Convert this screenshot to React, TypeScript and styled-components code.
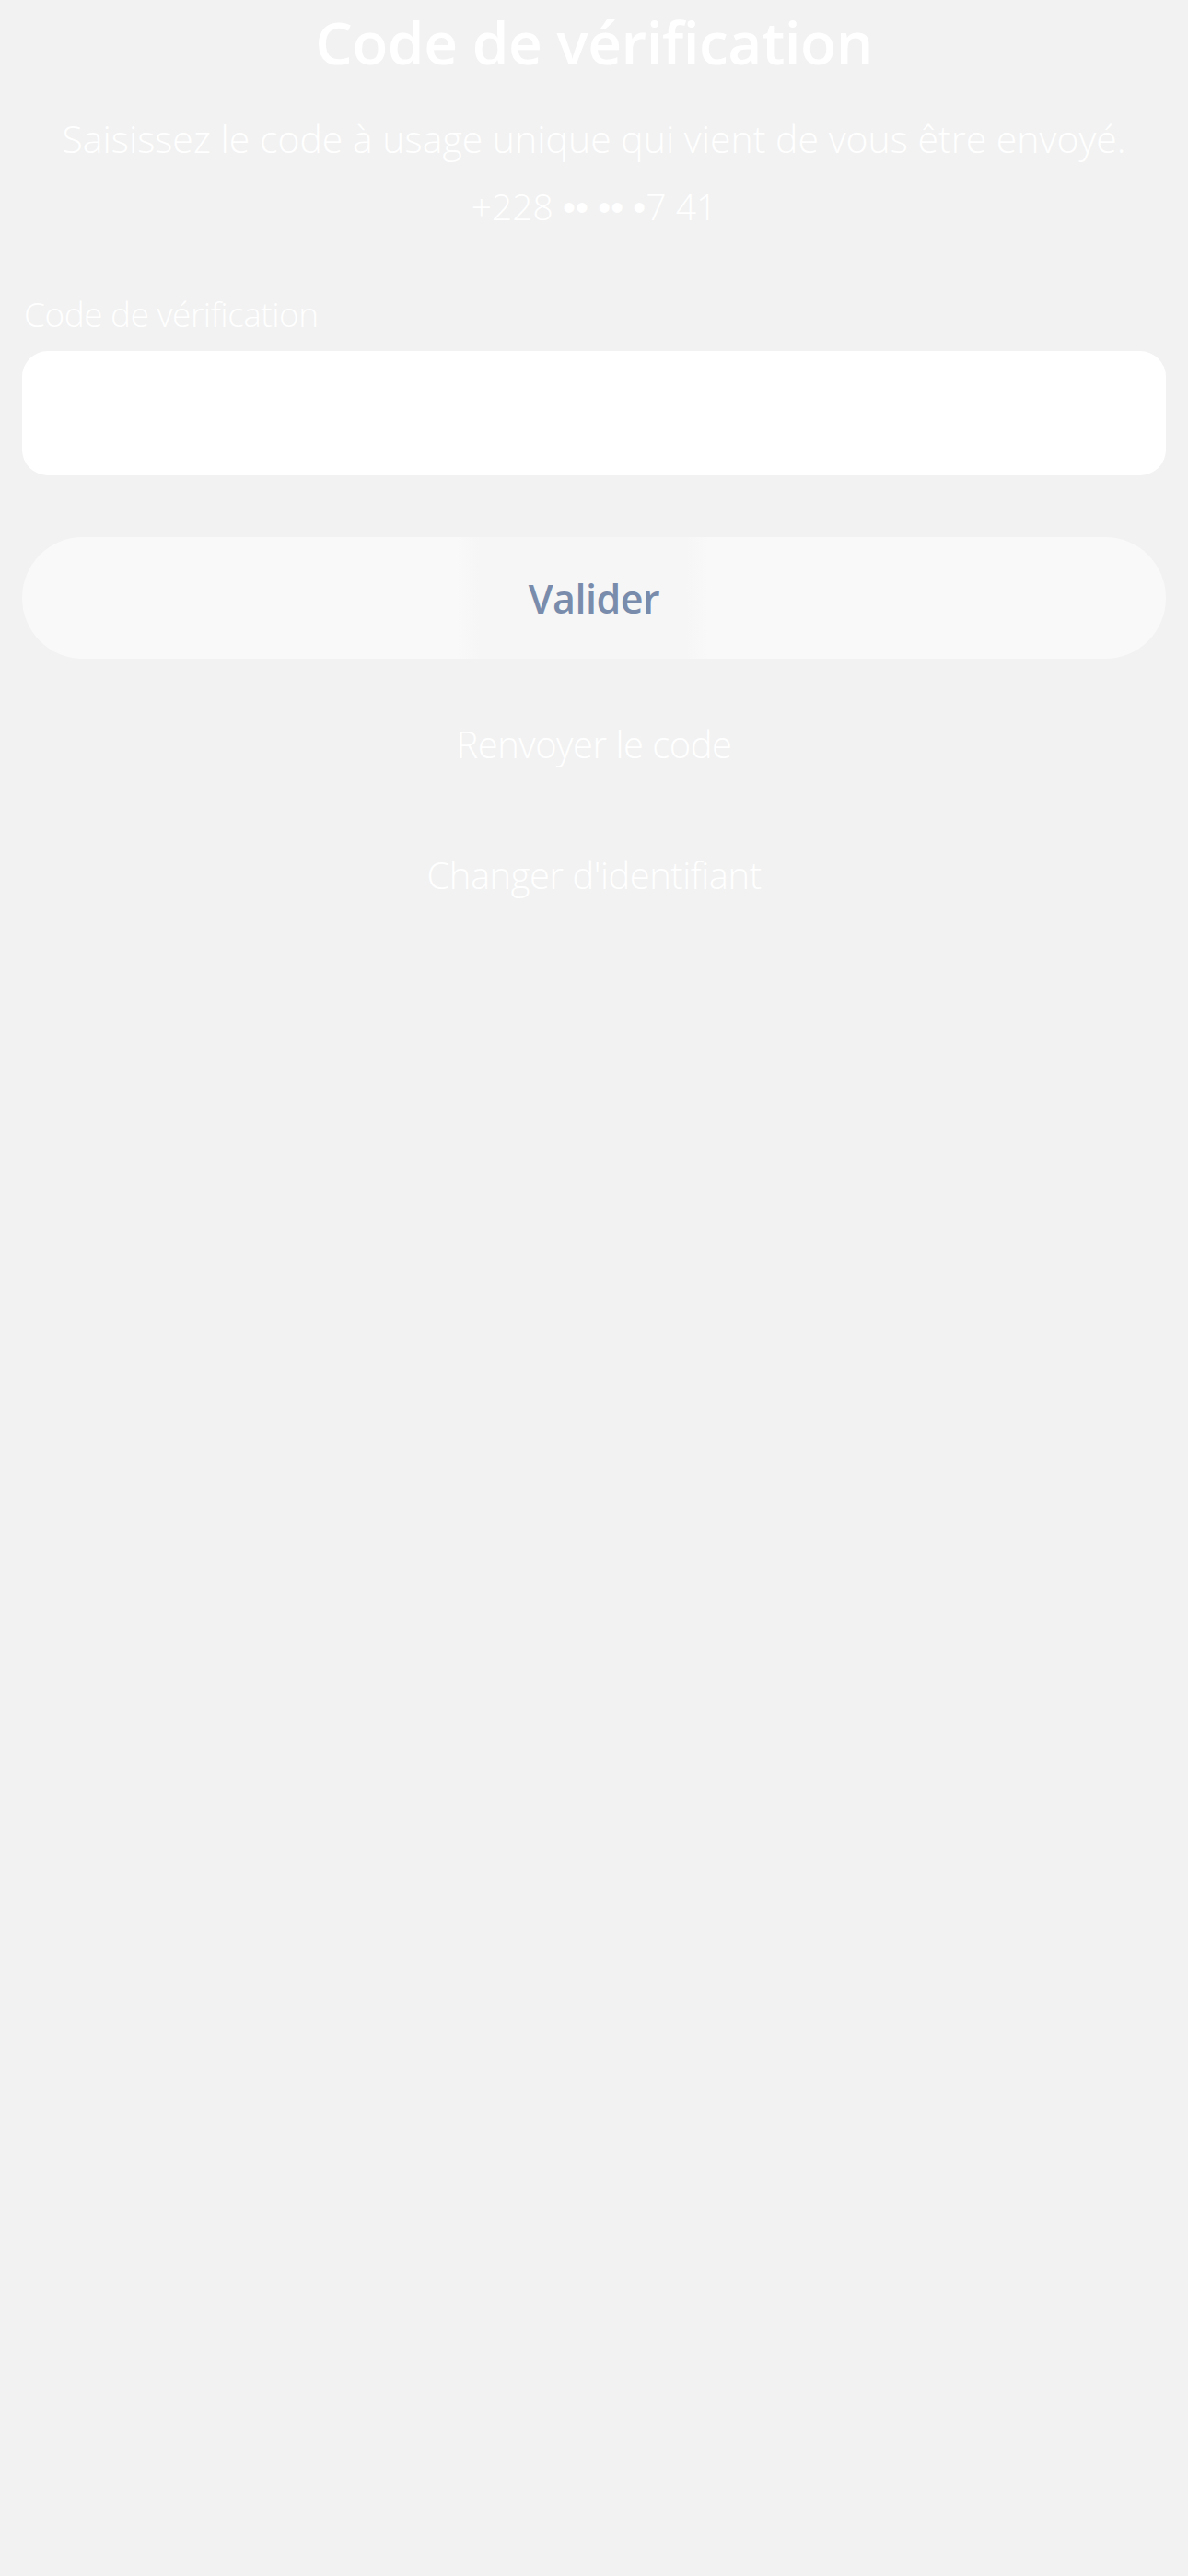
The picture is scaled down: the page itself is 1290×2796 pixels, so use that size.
import styled, { createGlobalStyle } from 'styled-components';

const GlobalStyle = createGlobalStyle`
  html, body {
    margin: 0;
    padding: 0;
    background: #f2f2f2;
  }
  body {
    font-family: 'Open Sans', 'Noto Sans', sans-serif;
  }
`;

const Page = styled.div`
  min-height: 2796px;
  display: flex;
  flex-direction: column;
  padding: 0 24px;
  box-sizing: border-box;
  background: #f2f2f2;
  color: #ffffff;
`;

const Title = styled.h1`
  margin: 6px 0 0;
  font-size: 64px;
  line-height: 80px;
  font-weight: 600;
  text-align: center;
  letter-spacing: -0.5px;
`;

const Subtitle = styled.p`
  margin: 36px 0 0;
  font-size: 41px;
  line-height: 56px;
  font-weight: 300;
  text-align: center;
`;

const Phone = styled.p`
  margin: 18px 0 0;
  font-size: 39px;
  line-height: 56px;
  font-weight: 300;
  text-align: center;
`;

const Mask = styled.span`
  font-family: 'Liberation Sans', Arial, sans-serif;
  font-size: 40px;
`;

const Field = styled.label`
  display: flex;
  flex-direction: column;
  margin-top: 63px;
  gap: 15px;
`;

const FieldLabel = styled.span`
  font-size: 37px;
  line-height: 50px;
  font-weight: 300;
  padding-left: 2px;
  letter-spacing: -0.5px;
`;

const CodeInput = styled.input`
  height: 135px;
  border: none;
  border-radius: 28px;
  background: #ffffff;
  outline: none;
  padding: 0 32px;
  font-family: inherit;
  font-size: 40px;
  box-sizing: border-box;
`;

const SubmitButton = styled.button`
  margin-top: 67px;
  height: 132px;
  border: none;
  border-radius: 66px;
  background: linear-gradient(
    90deg,
    #f9f9f9 0%,
    #f9f9f9 38%,
    #f6f6f6 40%,
    #f6f6f6 58%,
    #f9f9f9 60%,
    #f9f9f9 100%
  );
  color: #7a8cab;
  font-family: inherit;
  font-size: 43px;
  font-weight: 600;
  letter-spacing: -0.5px;
  cursor: pointer;
`;

const LinkButton = styled.button<{ $gap: number }>`
  align-self: center;
  margin-top: ${(props) => props.$gap}px;
  padding: 0;
  border: none;
  background: none;
  color: #ffffff;
  font-family: inherit;
  font-size: 40px;
  line-height: 56px;
  font-weight: 300;
  letter-spacing: -0.5px;
  cursor: pointer;
`;

function App() {
  return (
    <>
      <GlobalStyle />
      <Page>
        <Title>Code de vérification</Title>
        <Subtitle>Saisissez le code à usage unique qui vient de vous être envoyé.</Subtitle>
        <Phone>
          +228 <Mask>••</Mask> <Mask>••</Mask> <Mask>•</Mask>7 41
        </Phone>
        <Field>
          <FieldLabel>Code de vérification</FieldLabel>
          <CodeInput type="text" inputMode="numeric" autoComplete="one-time-code" />
        </Field>
        <SubmitButton type="button">Valider</SubmitButton>
        <LinkButton type="button" $gap={65}>
          Renvoyer le code
        </LinkButton>
        <LinkButton type="button" $gap={86}>
          Changer d'identifiant
        </LinkButton>
      </Page>
    </>
  );
}

export default App;
